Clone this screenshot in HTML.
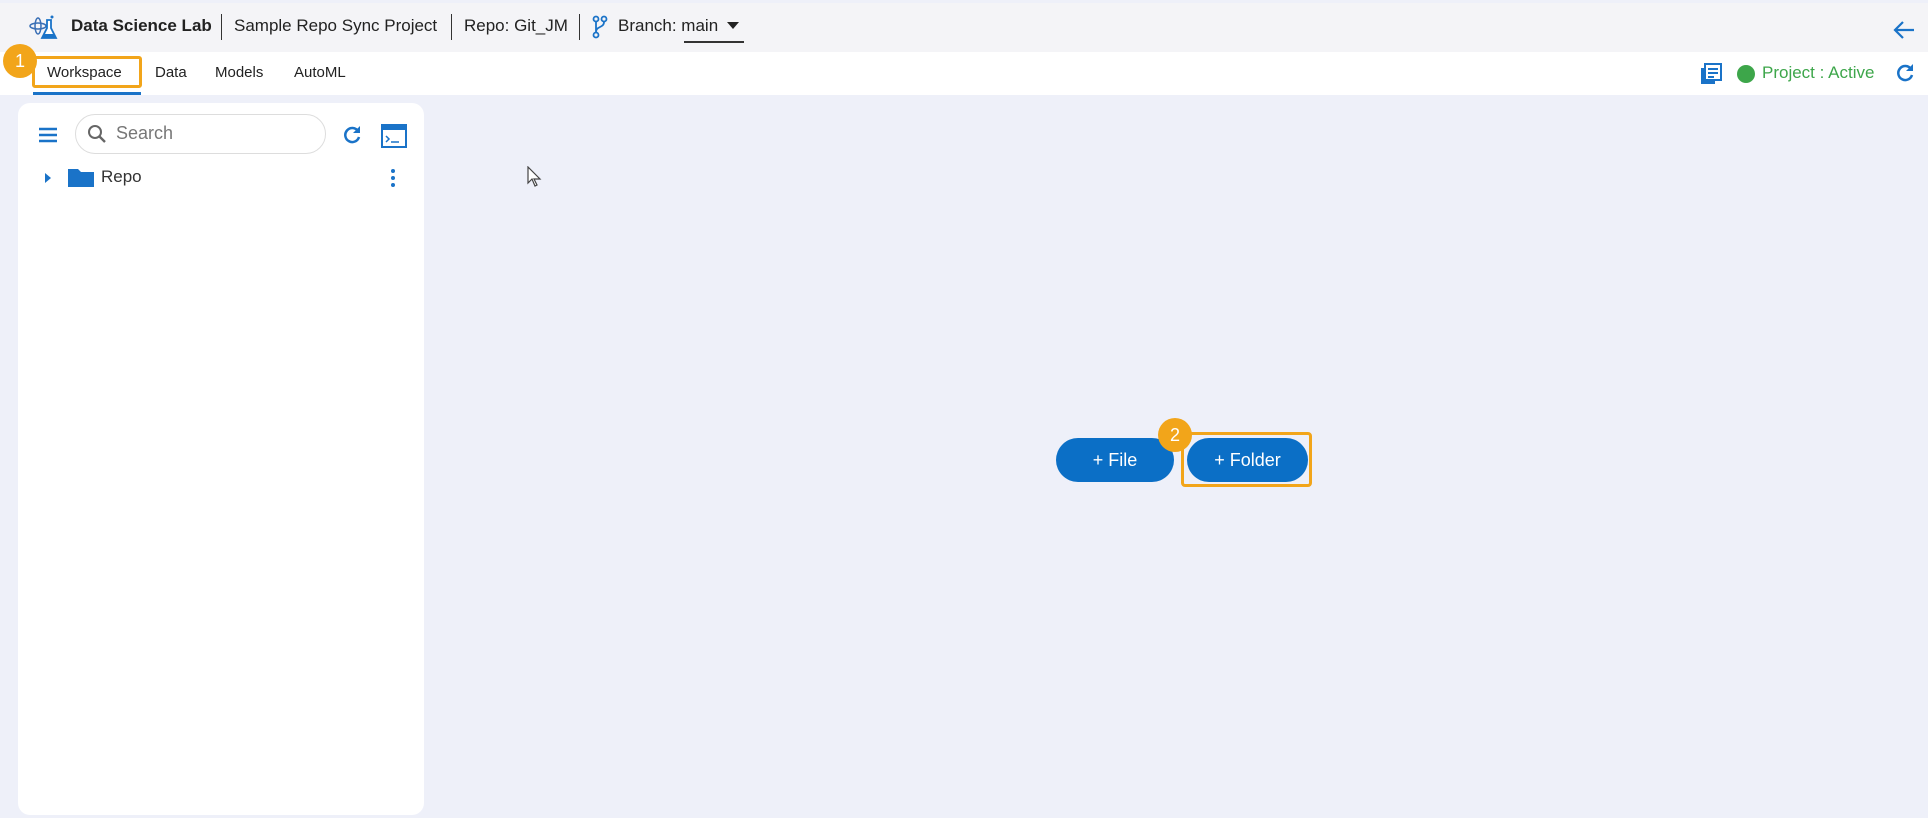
<!DOCTYPE html>
<html><head><style>
*{margin:0;padding:0;box-sizing:border-box}
body{width:1928px;height:818px;overflow:hidden;background:#eef0f9;font-family:"Liberation Sans",sans-serif;position:relative}
.top{position:absolute;left:0;top:3px;width:1928px;height:49px;background:#f4f4f7}
.tabs{position:absolute;left:0;top:52px;width:1928px;height:43px;background:#fff}
.t{position:absolute;font-size:17px;color:#222}
.abs{position:absolute}
.panel{position:absolute;left:18px;top:103px;width:406px;height:712px;background:#fff;border-radius:12px}
.btn{position:absolute;height:44px;border-radius:22px;background:#0b6fc6;color:#fff;font-size:18px;line-height:44px;text-align:center}
.badge{position:absolute;width:34px;height:34px;border-radius:50%;background:#f2a51a;color:#fff;font-size:18px;text-align:center;line-height:34px}
</style></head><body>
<div class="top"></div>
<div class="tabs"></div>
<svg class="abs" style="left:28px;top:12px" width="34" height="34" viewBox="0 0 34 34"><ellipse cx="10" cy="14" rx="8" ry="3" fill="none" stroke="#3a6fb5" stroke-width="1.5"/><ellipse cx="10" cy="14" rx="3" ry="8" fill="none" stroke="#3a6fb5" stroke-width="1.5"/><path d="M19 8v8l-5 10h14l-5-10V8z" fill="#fff" stroke="#1a73c8" stroke-width="1.8"/><path d="M16 22h10l2 4H14z" fill="#1a73c8"/><circle cx="24" cy="5" r="1.5" fill="#1a73c8"/></svg>
<div class="t" style="left:71px;top:16px;font-weight:bold">Data Science Lab</div>
<div class="abs" style="left:221px;top:14px;width:1px;height:26px;background:#333"></div>
<div class="t" style="left:234px;top:16px">Sample Repo Sync Project</div>
<div class="abs" style="left:451px;top:14px;width:1px;height:26px;background:#333"></div>
<div class="t" style="left:464px;top:16px">Repo: Git_JM</div>
<div class="abs" style="left:579px;top:14px;width:1px;height:26px;background:#333"></div>
<svg class="abs" style="left:592px;top:15px" width="16" height="24" viewBox="0 0 16 24"><g fill="none" stroke="#1a73c8" stroke-width="1.8"><circle cx="4" cy="4" r="2.5"/><circle cx="12" cy="4" r="2.5"/><circle cx="4" cy="20" r="2.5"/><path d="M4 7v10M12 7c0 6-8 4-8 10"/></g></svg>
<div class="t" style="left:618px;top:16px">Branch: main</div>
<svg class="abs" style="left:727px;top:22px" width="12" height="8"><path d="M0 0h12L6 7z" fill="#222"/></svg>
<div class="abs" style="left:684px;top:41px;width:60px;height:2px;background:#333"></div>
<svg class="abs" style="left:1892px;top:19px" width="24" height="22" viewBox="0 0 24 22"><path d="M22 11H3M11 3l-8 8 8 8" fill="none" stroke="#1a73c8" stroke-width="2.2"/></svg>

<div class="t" style="left:47px;top:64px;font-size:15px">Workspace</div>
<div class="t" style="left:155px;top:64px;font-size:15px">Data</div>
<div class="t" style="left:215px;top:64px;font-size:15px">Models</div>
<div class="t" style="left:294px;top:64px;font-size:15px">AutoML</div>
<div class="abs" style="left:33px;top:92px;width:108px;height:3px;background:#1a73c8"></div>
<div class="abs" style="left:32px;top:56px;width:110px;height:32px;border:3px solid #f2a51a;border-radius:3px"></div>
<div class="badge" style="left:3px;top:44px">1</div>
<svg class="abs" style="left:1700px;top:63px" width="22" height="22" viewBox="0 0 22 22"><rect x="1" y="5" width="14" height="16" fill="#1a73c8"/><rect x="5" y="1" width="16" height="16" fill="#fff" stroke="#1a73c8" stroke-width="2"/><path d="M8 6h10M8 10h10M8 14h6" stroke="#1a73c8" stroke-width="2"/></svg>
<div class="abs" style="left:1737px;top:65px;width:18px;height:18px;border-radius:50%;background:#3da64a"></div>
<div class="t" style="left:1762px;top:63px;color:#3da64a">Project : Active</div>
<svg class="abs" style="left:1895px;top:63px" width="20" height="20" viewBox="0 0 20 20"><path d="M16 6A7 7 0 1 0 17 12" fill="none" stroke="#1a73c8" stroke-width="2.5"/><path d="M18 1v7h-7z" fill="#1a73c8"/></svg>

<div class="panel"></div>
<svg class="abs" style="left:39px;top:127px" width="20" height="16"><path d="M0 2h18M0 8h18M0 14h18" stroke="#1a73c8" stroke-width="2.4"/></svg>
<div class="abs" style="left:75px;top:114px;width:251px;height:40px;border:1px solid #ddd;border-radius:20px"></div>
<svg class="abs" style="left:87px;top:124px" width="20" height="20" viewBox="0 0 20 20"><circle cx="8" cy="8" r="6" fill="none" stroke="#666" stroke-width="2"/><path d="M12 12l6 6" stroke="#666" stroke-width="2.4"/></svg>
<div class="t" style="left:116px;top:123px;color:#777;font-size:18px">Search</div>
<svg class="abs" style="left:342px;top:125px" width="20" height="20" viewBox="0 0 20 20"><path d="M16 6A7 7 0 1 0 17 12" fill="none" stroke="#1a73c8" stroke-width="2.5"/><path d="M18 1v7h-7z" fill="#1a73c8"/></svg>
<svg class="abs" style="left:381px;top:124px" width="26" height="24" viewBox="0 0 26 24"><rect x="1" y="1" width="24" height="22" fill="#fff" stroke="#1a73c8" stroke-width="2"/><rect x="1" y="1" width="24" height="5" fill="#1a73c8"/><path d="M5 12l3 3-3 3M10 18h8" fill="none" stroke="#1a73c8" stroke-width="1.5"/></svg>
<svg class="abs" style="left:44px;top:172px" width="8" height="12"><path d="M1 1l6 5-6 5z" fill="#1a73c8"/></svg>
<svg class="abs" style="left:68px;top:167px" width="26" height="20" viewBox="0 0 26 20"><path d="M0 2h10l3 3h13v15H0z" fill="#1a73c8"/></svg>
<div class="t" style="left:101px;top:167px;color:#333">Repo</div>
<svg class="abs" style="left:389px;top:168px" width="8" height="20"><circle cx="4" cy="3" r="2" fill="#1a73c8"/><circle cx="4" cy="10" r="2" fill="#1a73c8"/><circle cx="4" cy="17" r="2" fill="#1a73c8"/></svg>
<svg class="abs" style="left:527px;top:166px" width="16" height="22" viewBox="0 0 16 22"><path d="M1 1v16l4-4 3 7 2-1-3-6h6z" fill="#fff" stroke="#444" stroke-width="1.2"/></svg>

<div class="btn" style="left:1056px;top:438px;width:118px">+ File</div>
<div class="btn" style="left:1187px;top:438px;width:121px">+ Folder</div>
<div class="abs" style="left:1181px;top:432px;width:131px;height:55px;border:3px solid #f2a51a;border-radius:4px"></div>
<div class="badge" style="left:1158px;top:418px">2</div>
</body></html>
